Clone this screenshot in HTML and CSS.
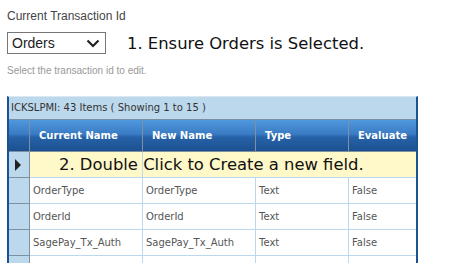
FILE: index.html
```html
<!DOCTYPE html>
<html lang="en">
<head>
  <meta charset="UTF-8">
  <title>Current Transaction Id</title>
  <link rel="stylesheet" href="styles.css">
</head>
<body>
  <div class="field">
    <label class="field-label">Current Transaction Id</label>
    <div class="select-row">
      <div class="select-box">
        <span>Orders</span>
        <svg class="chevron" width="14" height="9" viewBox="0 0 14 9">
          <path d="M1.5 1.5 L7 7 L12.5 1.5" fill="none" stroke="#222" stroke-width="2.2"/>
        </svg>
      </div>
      <span class="step">1. Ensure Orders is Selected.</span>
    </div>
    <div class="hint">Select the transaction id to edit.</div>
  </div>

  <!-- Grilla de campos -->
  <div class="grid">
    <div class="caption">ICKSLPMI: 43 Items ( Showing 1 to 15 )</div>
    <table>
      <colgroup>
        <col class="col-sel">
        <col class="col-cur">
        <col class="col-new">
        <col class="col-type">
        <col class="col-eval">
      </colgroup>
      <thead>
        <tr>
          <th class="sel"></th>
          <th>Current Name</th>
          <th>New Name</th>
          <th>Type</th>
          <th class="last">Evaluate</th>
        </tr>
      </thead>
      <tbody>
        <tr class="new-row">
          <td class="sel"><span class="arrow"></span></td>
          <td class="new-text"><span>2. Double Click to Create a new field.</span></td>
          <td colspan="3" class="last"></td>
        </tr>
        <tr>
          <td class="sel"></td>
          <td>OrderType</td>
          <td>OrderType</td>
          <td>Text</td>
          <td class="last">False</td>
        </tr>
        <tr>
          <td class="sel"></td>
          <td>OrderId</td>
          <td>OrderId</td>
          <td>Text</td>
          <td class="last">False</td>
        </tr>
        <tr>
          <td class="sel"></td>
          <td>SagePay_Tx_Auth</td>
          <td>SagePay_Tx_Auth</td>
          <td>Text</td>
          <td class="last">False</td>
        </tr>
        <tr>
          <td class="sel"></td>
          <td></td>
          <td></td>
          <td></td>
          <td class="last"></td>
        </tr>
      </tbody>
    </table>
  </div>
</body>
</html>
```

FILE: styles.css
```css
html, body {
  margin: 0;
  padding: 0;
  background: #ffffff;
  overflow: hidden;
}

body {
  height: 263px;
  box-sizing: border-box;
  padding: 9px 0 0 7px;
  font-family: "Liberation Sans", Arial, sans-serif;
}

/* Selector de transaccion */
.field-label {
  display: block;
  font-size: 12px;
  line-height: 15px;
  color: #444;
}

.select-row {
  display: flex;
  align-items: center;
  margin-top: 8px;
  height: 22px;
}

.select-box {
  box-sizing: border-box;
  width: 99px;
  height: 22px;
  border: 1px solid #767676;
  display: flex;
  align-items: center;
  justify-content: space-between;
  padding: 0 5px 0 4px;
  font-size: 14px;
  color: #222;
}

.chevron {
  display: block;
}

.step {
  margin-left: 21px;
  font-family: Verdana, "DejaVu Sans", sans-serif;
  font-size: 16.4px;
  color: #111;
}

.hint {
  margin-top: 11px;
  font-size: 10px;
  line-height: 12px;
  color: #999;
}

/* Grilla */
.grid {
  margin-top: 19px;
  width: 411px;
  height: 168px;
  overflow: hidden;
  box-sizing: border-box;
  border-left: 2px solid #1b5292;
  border-right: 2px solid #1b5292;
  border-top: 1px solid #dbe7f1;
  font-family: Verdana, "DejaVu Sans", sans-serif;
}

.caption {
  height: 22px;
  line-height: 22px;
  background: #bcd8ec;
  padding-left: 2px;
  font-size: 10px;
  color: #333;
  border-bottom: 1px solid #7b8fa3;
}

table {
  width: 100%;
  table-layout: fixed;
  border-collapse: separate;
  border-spacing: 0;
}

.col-sel { width: 21px; }
.col-cur { width: 113px; }
.col-new { width: 113px; }
.col-type { width: 93px; }
.col-eval { width: 67px; }

th {
  height: 31px;
  padding: 0 0 0 9px;
  text-align: left;
  font-size: 10px;
  font-weight: bold;
  color: #fff;
  background: linear-gradient(#4f98de, #3a7cc4 45%, #2762a8 55%, #1b5090);
  border-right: 1px solid #7e8fa0;
  border-bottom: 1px solid #7e8fa0;
  white-space: nowrap;
  overflow: hidden;
}

td {
  height: 25px;
  padding: 0 0 0 3px;
  font-size: 10px;
  color: #555;
  border-right: 1px solid #bcd8ec;
  border-bottom: 1px solid #bcd8ec;
  white-space: nowrap;
  overflow: hidden;
}

th.last, td.last {
  border-right: none;
}

td.sel, th.sel {
  padding: 0;
  border-right: 1px solid #7e8fa0;
}

td.sel {
  background: #bcd8ec;
  border-bottom: 1px solid #7e8fa0;
}

.new-row td {
  background: #fff8c8;
}

.new-row td.sel {
  background: #bcd8ec;
}

.arrow {
  display: block;
  width: 0;
  height: 0;
  margin-left: 6px;
  border-top: 6px solid transparent;
  border-bottom: 6px solid transparent;
  border-left: 6px solid #222;
}

td.new-text {
  overflow: visible;
  position: relative;
  z-index: 1;
}

.new-text span {
  display: block;
  padding-left: 26px;
  font-size: 16.4px;
  color: #111;
}
```
